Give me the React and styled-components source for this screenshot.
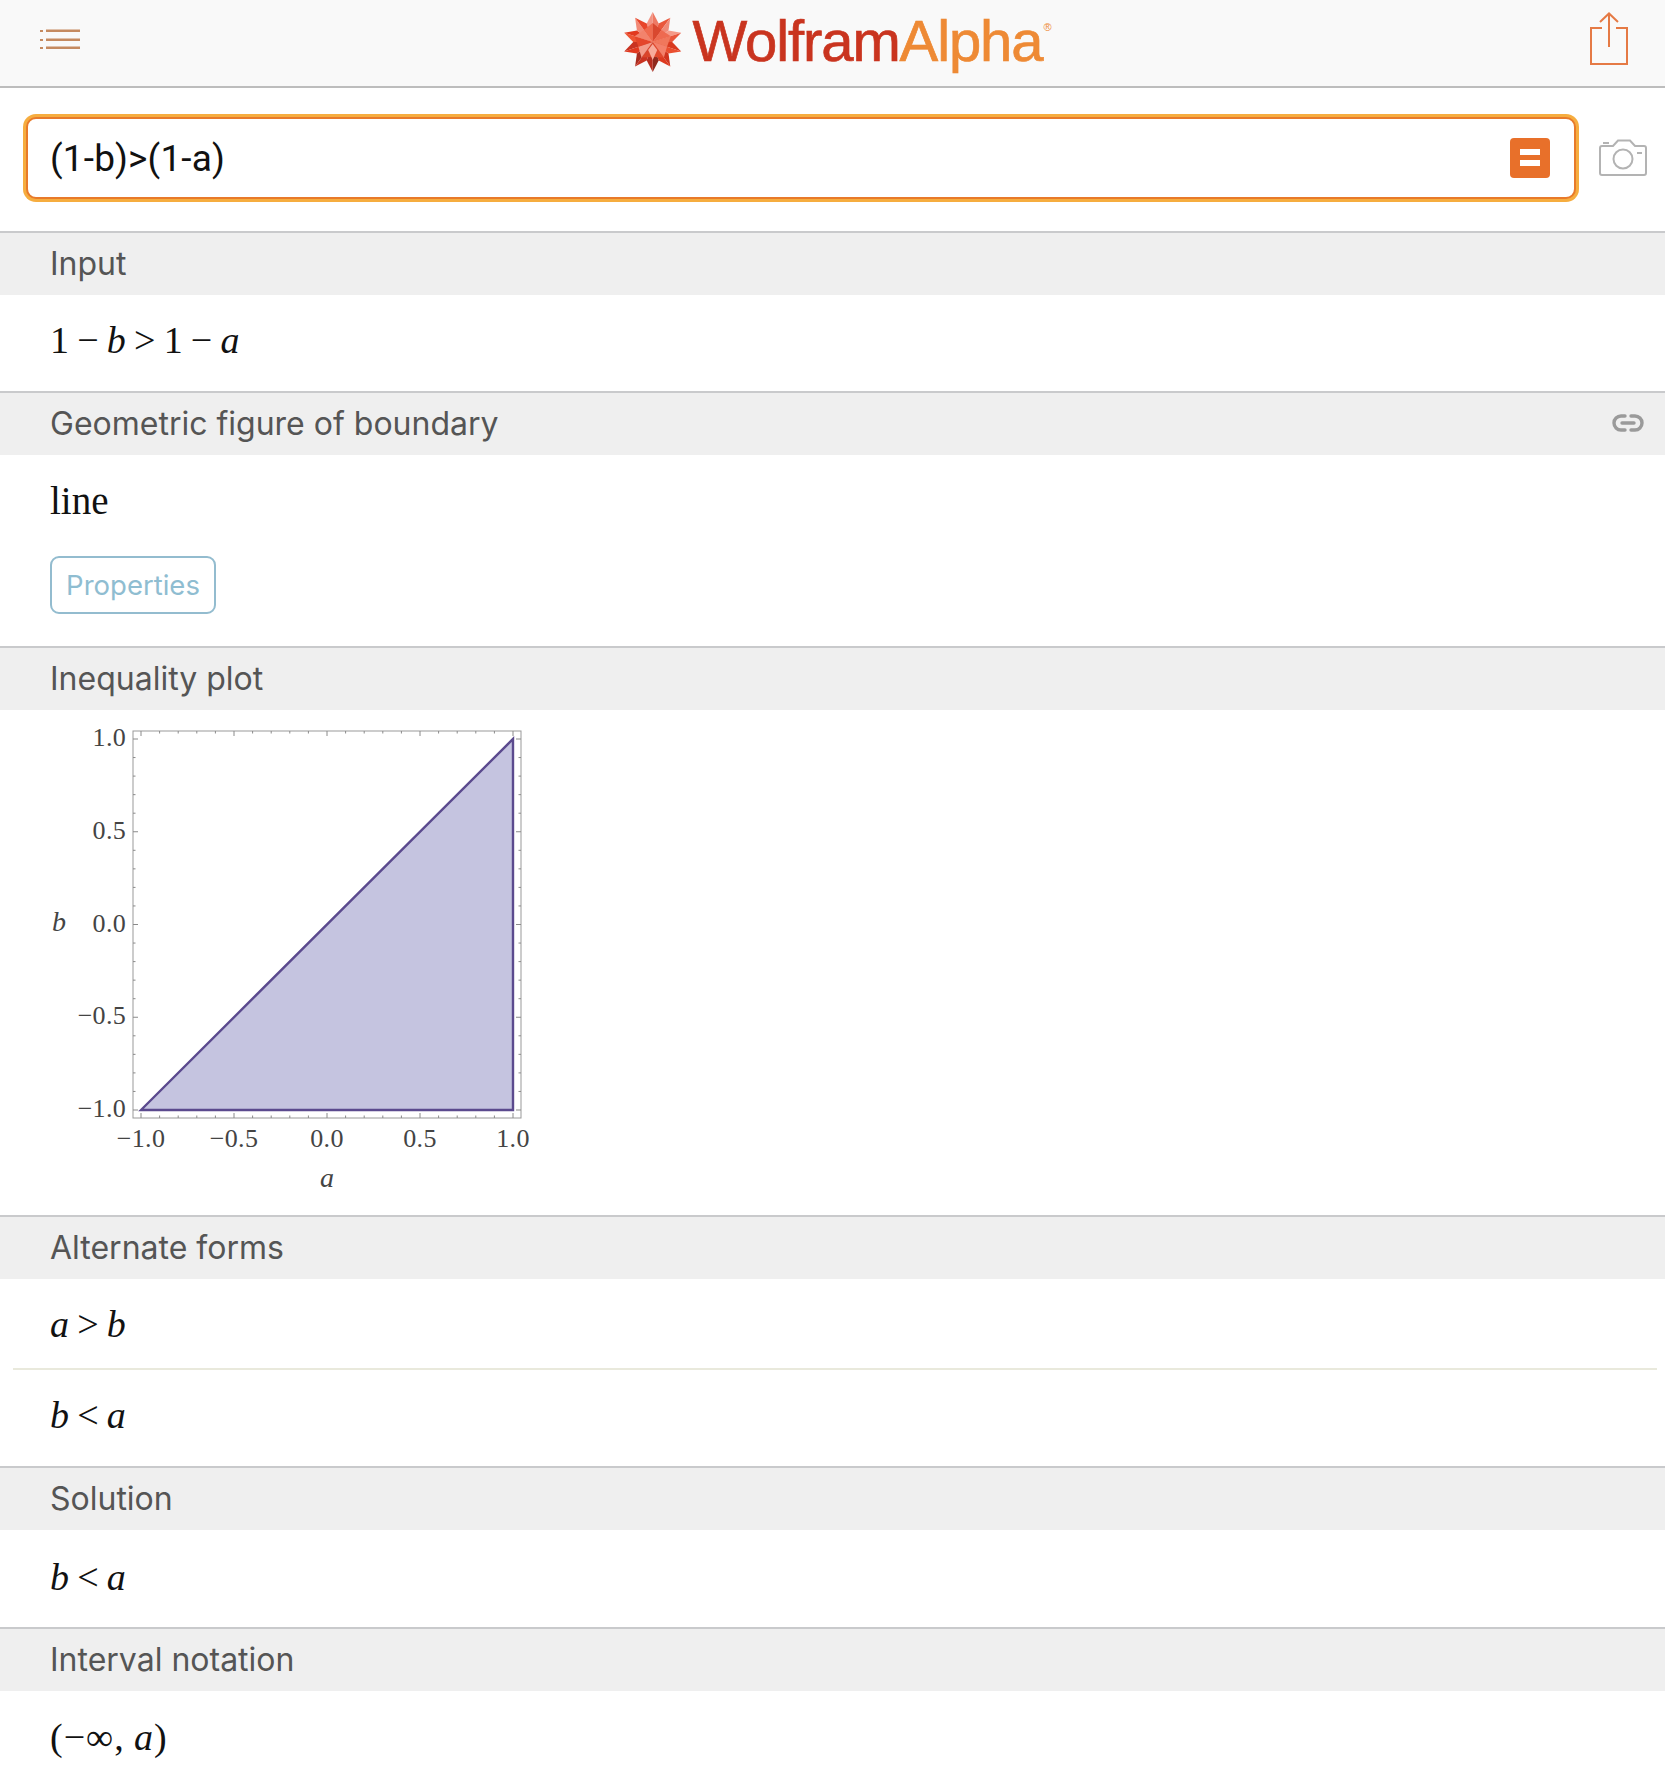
import React from 'react'
import styled, { createGlobalStyle } from 'styled-components'

const GlobalStyle = createGlobalStyle`
  html, body { margin: 0; padding: 0; background: #fff; }
  body { font-family: Inter, "Liberation Sans", sans-serif; }
`

const Page = styled.div`
  width: 1665px;
  height: 1784px;
  overflow: hidden;
  background: #fff;
`

const TopBar = styled.header`
  height: 86px;
  box-sizing: content-box;
  display: flex;
  align-items: center;
  justify-content: space-between;
  padding: 0 36px 0 40px;
  background: #f9f9f9;
  border-bottom: 2px solid #bdbdbd;
  svg.menu { margin-bottom: 6px; }
  svg.share { margin-bottom: 8px; }
`

const Logo = styled.div`
  display: flex;
  align-items: flex-start;
  margin-left: 6px;
  height: 72px;
`

const SpikeyWrap = styled.div`
  margin-top: 4px;
  height: 62px;
`

const LogoText = styled.div`
  font-family: "Liberation Sans", Arial, sans-serif;
  font-size: 58px;
  line-height: 72px;
  letter-spacing: -1.1px;
  -webkit-text-stroke: 0.7px ${p => p.$color};
  margin-left: ${p => p.$gap || 0}px;
  margin-top: -2px;
  color: ${p => p.$color};
`

const Registered = styled.span`
  font-family: "Liberation Sans", Arial, sans-serif;
  font-size: 11px;
  line-height: 14px;
  color: #ee8a35;
  margin-top: 13px;
  margin-left: 1px;
`

const SearchRow = styled.div`
  display: flex;
  align-items: center;
  height: 139px;
  padding: 0 18px 4px 26px;
  gap: 23px;
`

const SearchBox = styled.div`
  flex: 1;
  height: 78px;
  display: flex;
  align-items: center;
  justify-content: space-between;
  padding: 0 24px 0 22px;
  background: #fff;
  border: 2px solid #e87a2a;
  border-radius: 10px;
  box-shadow: 0 0 0 3px #f6ad3f;
  font-family: Roboto, "Liberation Sans", sans-serif;
  font-size: 37px;
  color: #111;
`

const QueryText = styled.span`
  letter-spacing: 0.15px;
  padding-top: 2px;
`

const EqualsButton = styled.div`
  width: 40px;
  height: 40px;
  border-radius: 4px;
  background: #e8702a;
  display: flex;
  flex-direction: column;
  align-items: center;
  justify-content: center;
  gap: 5px;
`

const EqualsBar = styled.span`
  width: 20px;
  height: 6px;
  background: #fff;
`

const PodTitle = styled.div`
  display: flex;
  align-items: center;
  justify-content: space-between;
  padding: 0 21px 2px 50px;
  box-sizing: content-box;
  height: 60px;
  background: #efefef;
  border-top: 2px solid #c9cacc;
  font-size: 32px;
  color: #555;
`

const PodBody = styled.div`
  height: ${p => p.$height}px;
  box-sizing: border-box;
  display: flex;
  align-items: center;
  padding-left: 50px;
  padding-bottom: ${p => p.$lift || 0}px;
`

const MathText = styled.div`
  font-family: "Liberation Serif", "Times New Roman", serif;
  font-size: 38px;
  color: #111;
  word-spacing: -1.3px;
  letter-spacing: ${p => p.$tracking || 0}px;
  i { font-style: italic; }
`

const Word = styled.div`
  font-family: "Liberation Serif", "Times New Roman", serif;
  font-size: 39px;
  color: #111;
`

const LineBody = styled.div`
  height: 191px;
  padding: 23px 0 0 50px;
  box-sizing: border-box;
`

const PropertiesButton = styled.div`
  width: 166px;
  height: 58px;
  margin-top: 33px;
  box-sizing: border-box;
  display: flex;
  align-items: center;
  justify-content: center;
  border: 2px solid #93bccf;
  border-radius: 9px;
  font-size: 27.5px;
  color: #8fbdd1;
`

const PlotBody = styled.div`
  height: 505px;
  padding-left: 40px;
`

const Divider = styled.div`
  height: 2px;
  margin: 0 8px 0 13px;
  background: #e9e9dc;
`

// wolfram spikey, coordinates come from a 110x85 crop of the logo
const cx = 43.7, cy = 41.6
const polar = (r, deg) => {
  const a = (deg * Math.PI) / 180
  return [cx + r * Math.cos(a), cy - r * Math.sin(a)]
}
const pts = list => list.map(p => p.map(n => n.toFixed(1)).join(',')).join(' ')

const tipColors = [
  ['#f39484', '#ee7a64'], // top
  ['#e9573c', '#f08a78'],
  ['#f59a88', '#e9573c'],
  ['#d93a20', '#ea4f2f'],
  ['#d0341f', '#dd3a20'],
  ['#8f2a1e', '#b72d20'], // bottom
  ['#c93322', '#a92b1e'],
  ['#e2391f', '#c93322'],
  ['#ee5533', '#e2391f'],
  ['#f28a76', '#e8452a'],
]

// inner five kites, left and right half
const kites = [
  { deg: 90, a: '#ef6a4e', b: '#d9482f' },
  { deg: 18, a: '#ee6a50', b: '#f0775c' },
  { deg: -54, a: '#f3806a', b: '#e0492e' },
  { deg: -126, a: '#d9452b', b: '#f39c8a' },
  { deg: 162, a: '#e4462b', b: '#f2836c' },
]

const Spikey = () => (
  <svg width="60" height="62" viewBox="14 10.5 60 62">
    {tipColors.map(([a, b], i) => {
      const deg = 90 - i * 36
      const tip = polar(30, deg)
      const v1 = polar(19.5, deg + 18)
      const v2 = polar(19.5, deg - 18)
      const c = polar(0, 0)
      return (
        <g key={i}>
          <polygon points={pts([v1, tip, c])} fill={a} />
          <polygon points={pts([v2, tip, c])} fill={b} />
        </g>
      )
    })}
    {kites.map(({ deg, a, b }) => (
      <g key={deg}>
        <polygon points={pts([polar(0, 0), polar(15, deg + 36), polar(19, deg)])} fill={a} />
        <polygon points={pts([polar(0, 0), polar(15, deg - 36), polar(19, deg)])} fill={b} />
      </g>
    ))}
    <polygon points={pts([polar(2, -90), polar(9, -60), polar(18, -90), polar(9, -120)])} fill="#f7ab9b" />
  </svg>
)

const MenuIcon = () => (
  <svg className="menu" width="40" height="22" viewBox="0 0 40 22" fill="#c58a60">
    <rect x="0" y="1" width="3" height="2" />
    <rect x="6" y="0.5" width="34" height="2.5" />
    <rect x="0" y="10" width="3" height="2" />
    <rect x="6" y="9.5" width="34" height="2.5" />
    <rect x="0" y="18" width="3" height="2" />
    <rect x="6" y="17.5" width="34" height="2.5" />
  </svg>
)

const ShareIcon = () => (
  <svg className="share" width="40" height="54" viewBox="0 0 40 54" fill="none" stroke="#e57a45" strokeWidth="2">
    <path d="M13 16H2V52H38V16H27" />
    <path d="M20 2V35" />
    <path d="M11 10L20 1.5L29 10" />
  </svg>
)

const CameraIcon = () => (
  <svg width="48" height="37" viewBox="0 0 48 37" fill="none" stroke="#b3b3b3" strokeWidth="2">
    <path d="M3 7H14L19 1.5H31L36 7H45Q47 7 47 9V34Q47 36 45 36H3Q1 36 1 34V9Q1 7 3 7Z" />
    <circle cx="24" cy="20" r="9.5" />
    <path d="M4 4H10M38 14H43" />
  </svg>
)

const LinkIcon = () => (
  <svg width="32" height="20" viewBox="0 0 32 20" fill="none" stroke="#9a9a9a" strokeWidth="3.4" strokeLinecap="round">
    <path d="M13 3H9A7 7 0 0 0 9 17H13" />
    <path d="M19 3H23A7 7 0 0 1 23 17H19" />
    <path d="M10 10H22" />
  </svg>
)

// plot uses page coordinates so the numbers read against the screenshot
const X0 = 141, X1 = 513, Y0 = 1109, Y1 = 738
const FL = 133, FR = 521, FT = 730, FB = 1117
const sx = v => X0 + ((v + 1) / 2) * (X1 - X0)
const sy = v => Y0 - ((v + 1) / 2) * (Y0 - Y1)
const steps = Array.from({ length: 21 }, (_, i) => -1 + i * 0.1)
const labels = [-1, -0.5, 0, 0.5, 1]
const fmt = v => (v < 0 ? '\u2212' : '') + Math.abs(v).toFixed(1)

const PlotLabel = styled.text`
  font-family: "Liberation Serif", "Times New Roman", serif;
  font-size: 26px;
  fill: #444;
`

const AxisName = styled(PlotLabel)`
  font-size: 28px;
  font-style: italic;
`

const InequalityPlot = () => (
  <svg width="500" height="505" viewBox="40 709 500 505">
    <rect x={FL} y={FT} width={FR - FL} height={FB - FT} fill="#fff" stroke="#999" strokeWidth="1" />
    {steps.map((v, i) => {
      const len = i % 5 === 0 ? 5 : 2.5
      return (
        <g key={i} stroke="#8a8a8a" strokeWidth="1">
          <line x1={sx(v)} x2={sx(v)} y1={FT} y2={FT + len} />
          <line x1={sx(v)} x2={sx(v)} y1={FB} y2={FB - len} />
          <line y1={sy(v)} y2={sy(v)} x1={FL} x2={FL + len} />
          <line y1={sy(v)} y2={sy(v)} x1={FR} x2={FR - len} />
        </g>
      )
    })}
    <polygon
      points={`${X0},${Y0} ${X1},${Y1} ${X1},${Y0}`}
      fill="#c5c4e0"
      stroke="#5b4a8e"
      strokeWidth="2.4"
    />
    {labels.map(v => (
      <PlotLabel key={`y${v}`} x="126" y={sy(v) + 7} textAnchor="end" letterSpacing="0.3">{fmt(v)}</PlotLabel>
    ))}
    {labels.map(v => (
      <PlotLabel key={`x${v}`} x={sx(v)} y="1146" textAnchor="middle" letterSpacing="0.3">{fmt(v)}</PlotLabel>
    ))}
    <AxisName x="327" y="1186" textAnchor="middle">a</AxisName>
    <AxisName x="52" y="930">b</AxisName>
  </svg>
)

const Pod = ({ title, icon, children }) => (
  <section>
    <PodTitle>
      <span>{title}</span>
      {icon}
    </PodTitle>
    {children}
  </section>
)

const App = () => (
  <Page>
    <GlobalStyle />
    <TopBar>
      <MenuIcon />
      <Logo>
        <SpikeyWrap><Spikey /></SpikeyWrap>
        <LogoText $color="#c9341f" $gap={9}>Wolfram</LogoText>
        <LogoText $color="#ee8a35">Alpha</LogoText>
        <Registered>®</Registered>
      </Logo>
      <ShareIcon />
    </TopBar>
    <SearchRow>
      <SearchBox>
        <QueryText>(1-b)&gt;(1-a)</QueryText>
        <EqualsButton>
          <EqualsBar />
          <EqualsBar />
        </EqualsButton>
      </SearchBox>
      <CameraIcon />
    </SearchRow>
    <Pod title="Input">
      <PodBody $height={96} $lift={7}>
        <MathText>1 − <i>b</i> &gt; 1 − <i>a</i></MathText>
      </PodBody>
    </Pod>
    <Pod title="Geometric figure of boundary" icon={<LinkIcon />}>
      <LineBody>
        <Word>line</Word>
        <PropertiesButton>Properties</PropertiesButton>
      </LineBody>
    </Pod>
    <Pod title="Inequality plot">
      <PlotBody>
        <InequalityPlot />
      </PlotBody>
    </Pod>
    <Pod title="Alternate forms">
      <PodBody $height={89}>
        <MathText><i>a</i> &gt; <i>b</i></MathText>
      </PodBody>
      <Divider />
      <PodBody $height={96} $lift={6}>
        <MathText><i>b</i> &lt; <i>a</i></MathText>
      </PodBody>
    </Pod>
    <Pod title="Solution">
      <PodBody $height={97} $lift={4}>
        <MathText><i>b</i> &lt; <i>a</i></MathText>
      </PodBody>
    </Pod>
    <Pod title="Interval notation">
      <PodBody $height={92}>
        <MathText $tracking={1}>(−∞, <i>a</i>)</MathText>
      </PodBody>
    </Pod>
  </Page>
)

export default App
